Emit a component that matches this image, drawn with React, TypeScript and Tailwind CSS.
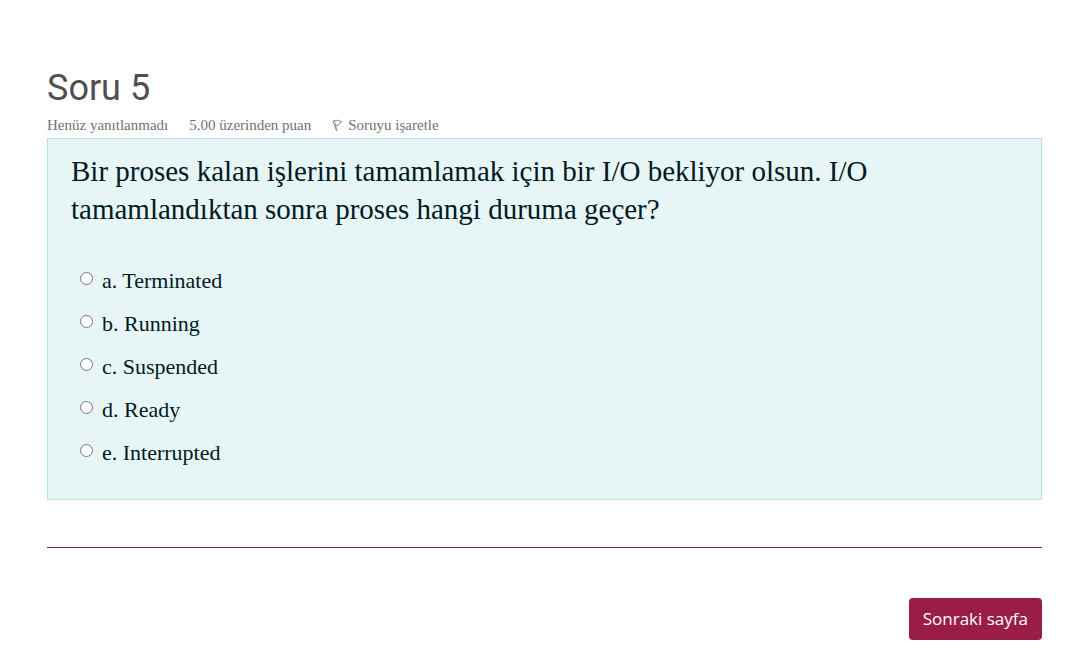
const options = ["a. Terminated", "b. Running", "c. Suspended", "d. Ready", "e. Interrupted"];

function FlagIcon() {
  return (
    <svg viewBox="0 0 11 13" className="mt-1 h-[13px] w-[11px]" fill="none" stroke="#7d8185" aria-hidden="true">
      <path d="M1 2 L4.6 12" strokeWidth="1" />
      <path d="M2.8 2.2 L5 11.8" strokeWidth="0.7" />
      <path d="M1 2 L4.2 1.2 L10 2.6 L7.4 4.2 L7 5.6 L3.4 6.8" strokeWidth="0.9" />
    </svg>
  );
}

export default function App() {
  return (
    <main className="bg-white pt-[66px] pr-10 pb-[18px] pl-[47px] font-['Georgia','Liberation_Serif',serif] text-[#001a1e]">
      <h1 className="font-['Roboto',sans-serif] text-[36px] leading-[44px] text-[#4f4f4f]">Soru 5</h1>
      <div className="mt-[5px] flex h-[23px] items-start gap-[21px] text-[15px] leading-5 text-[#6a737b]">
        <span>Henüz yanıtlanmadı</span>
        <span>5.00 üzerinden puan</span>
        <a href="#flag" className="flex items-start gap-[5px]">
          <FlagIcon />
          Soruyu işaretle
        </a>
      </div>
      <fieldset
        aria-labelledby="question-text"
        className="border border-[#b8e2e6] bg-[#e7f5f7] px-[23px] pt-[13px] pb-[31px]"
      >
        <p id="question-text" className="text-[29px] leading-[38px]">
          Bir proses kalan işlerini tamamlamak için bir I/O bekliyor olsun. I/O
          <br />
          tamamlandıktan sonra proses hangi duruma geçer?
        </p>
        <div className="mt-[38px] flex flex-col gap-[13px] pl-[9px]">
          {options.map((option, i) => (
            <div key={option} className="flex items-start gap-[9px]">
              <input
                id={`answer-${i}`}
                type="radio"
                name="answer"
                className="mt-[6px] size-[13px] shrink-0"
              />
              <label htmlFor={`answer-${i}`} className="text-[22px] leading-[30px]">
                {option}
              </label>
            </div>
          ))}
        </div>
      </fieldset>
      <hr className="mt-[47px] border-0 border-t border-solid border-t-[#6f2a5c]" />
      <div className="mt-[50px] flex justify-end">
        <button
          type="button"
          className="h-[42px] rounded bg-[#9a1d48] px-[14px] font-['Open_Sans',sans-serif] text-[17px] leading-7 text-white"
        >
          Sonraki sayfa
        </button>
      </div>
    </main>
  );
}
